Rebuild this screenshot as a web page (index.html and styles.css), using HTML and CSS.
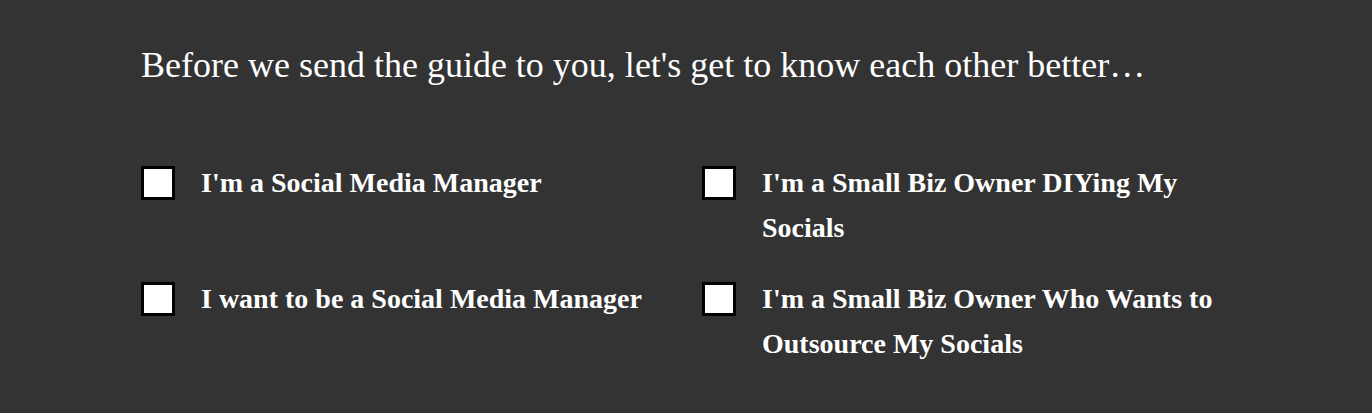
FILE: index.html
```html
<!DOCTYPE html>
<html>
<head>
<meta charset="utf-8">
<link rel="stylesheet" href="styles.css">
</head>
<body>
<div class="wrap">
  <h1 class="intro">Before we send the guide to you, let's get to know each other better…</h1>
  <div class="options">
    <label class="opt"><span class="box"></span><span class="txt">I'm a Social Media Manager</span></label>
    <label class="opt"><span class="box"></span><span class="txt">I'm a Small Biz Owner DIYing My Socials</span></label>
    <label class="opt"><span class="box"></span><span class="txt">I want to be a Social Media Manager</span></label>
    <label class="opt"><span class="box"></span><span class="txt">I'm a Small Biz Owner Who Wants to Outsource My Socials</span></label>
  </div>
</div>
</body>
</html>
```
FILE: styles.css
```css
html, body { margin: 0; padding: 0; background: #333333; }
body { font-family: "Liberation Serif", "Times New Roman", serif; color: #ffffff; }
.wrap { padding: 43px 0 0 141px; width: 1090px; }
.intro { margin: 0; font-weight: normal; font-size: 36px; line-height: 44px; }
.options { display: grid; grid-template-columns: 545px 545px; column-gap: 16px; row-gap: 26px; margin-top: 73px; }
.opt { display: flex; align-items: flex-start; }
.box { flex: none; width: 28px; height: 28px; background: #fff; border: 3px solid #000; margin-top: 6px; margin-right: 26px; }
.txt { font-weight: bold; font-size: 28px; line-height: 45px; }
```
